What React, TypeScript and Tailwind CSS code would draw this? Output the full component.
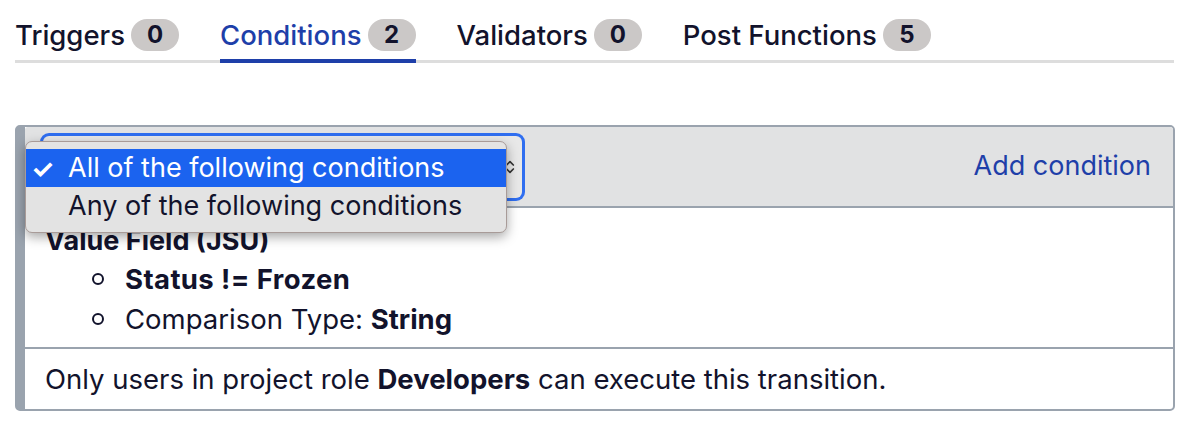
import { ChevronsUpDown } from "lucide-react";

const tabs = [
  { label: "Triggers", count: 0 },
  { label: "Conditions", count: 2, active: true },
  { label: "Validators", count: 0 },
  { label: "Post Functions", count: 5 },
];

function Tabs() {
  return (
    <div className="flex gap-[41px] border-b-[3px] border-[#dddddd] h-[63px]">
      {tabs.map((t) => (
        <div
          key={t.label}
          className={
            "flex items-start gap-[6px] pt-[19px] -mb-[3px] " +
            (t.active ? "border-b-4 border-[#1e3fa9] text-[#1e3fa9]" : "text-[#12132c]")
          }
        >
          <span className="text-[27.5px] leading-[32px] font-medium">{t.label}</span>
          <span className="h-[32px] min-w-[48px] px-3 rounded-full bg-[#cbc8c7] text-[#12132c] text-[24px] font-bold leading-[32px] text-center">
            {t.count}
          </span>
        </div>
      ))}
    </div>
  );
}

function SelectMenu() {
  return (
    <div className="absolute left-0 top-[14px] w-[482px] rounded-[7px] bg-[#e3e3e3] border border-[#a89b98] shadow-[0_4px_12px_rgba(0,0,0,0.35)] py-[7px] text-[27px]">
      <div className="flex items-center h-[38px] bg-[#1b63ef] text-white">
        <span className="w-[42px] pl-[5px] text-[26px] font-bold">✓</span>
        <span>All of the following conditions</span>
      </div>
      <div className="flex items-center h-[38px] text-[#12132c]">
        <span className="w-[42px]" />
        <span>Any of the following conditions</span>
      </div>
    </div>
  );
}

export default function App() {
  return (
    <div className="w-[1189px] h-[434px] bg-white px-[15px] text-[#12132c] font-['Inter',sans-serif]">
      <Tabs />

      <div className="mt-[62px] w-[1160px] border-2 border-l-[10px] border-[#9aa3ae] rounded-[5px]">
        {/* header */}
        <div className="relative flex items-center justify-between h-[81px] bg-[#e1e2e3] border-b-2 border-[#9aa3ae] pl-[18px] pr-[22px] rounded-t-[3px]">
          <div className="flex items-center justify-end w-[479px] h-[62px] rounded-[6px] bg-[#e8e8e8] ring-[3px] ring-[#2f6ef0] pr-[4px]">
            <ChevronsUpDown className="w-[16px] h-[22px] text-[#333]" strokeWidth={2.5} />
          </div>
          <a className="text-[27px] text-[#1e3fa9]">Add condition</a>
          <SelectMenu />
        </div>

        {/* condition 1 */}
        <div className="pt-[14px] pb-[8px] pl-[20px] border-b-2 border-[#9aa3ae]">
          <div className="text-[27px] leading-[37px] font-bold">Value Field (JSU)</div>
          <ul className="text-[27.5px] leading-[40px]">
            <li className="flex items-center">
              <span className="w-[12px] h-[12px] rounded-full border-2 border-[#12132c] ml-[47px] mr-[21px]" />
              <b className="tracking-[0.4px]">Status != Frozen</b>
            </li>
            <li className="flex items-center">
              <span className="w-[12px] h-[12px] rounded-full border-2 border-[#12132c] ml-[47px] mr-[21px]" />
              <span>
                Comparison Type: <b>String</b>
              </span>
            </li>
          </ul>
        </div>

        {/* condition 2 */}
        <div className="pt-[12px] pb-[12px] pl-[20px] text-[27.5px] leading-[36px]">
          Only users in project role <b>Developers</b> can execute this transition.
        </div>
      </div>
    </div>
  );
}
